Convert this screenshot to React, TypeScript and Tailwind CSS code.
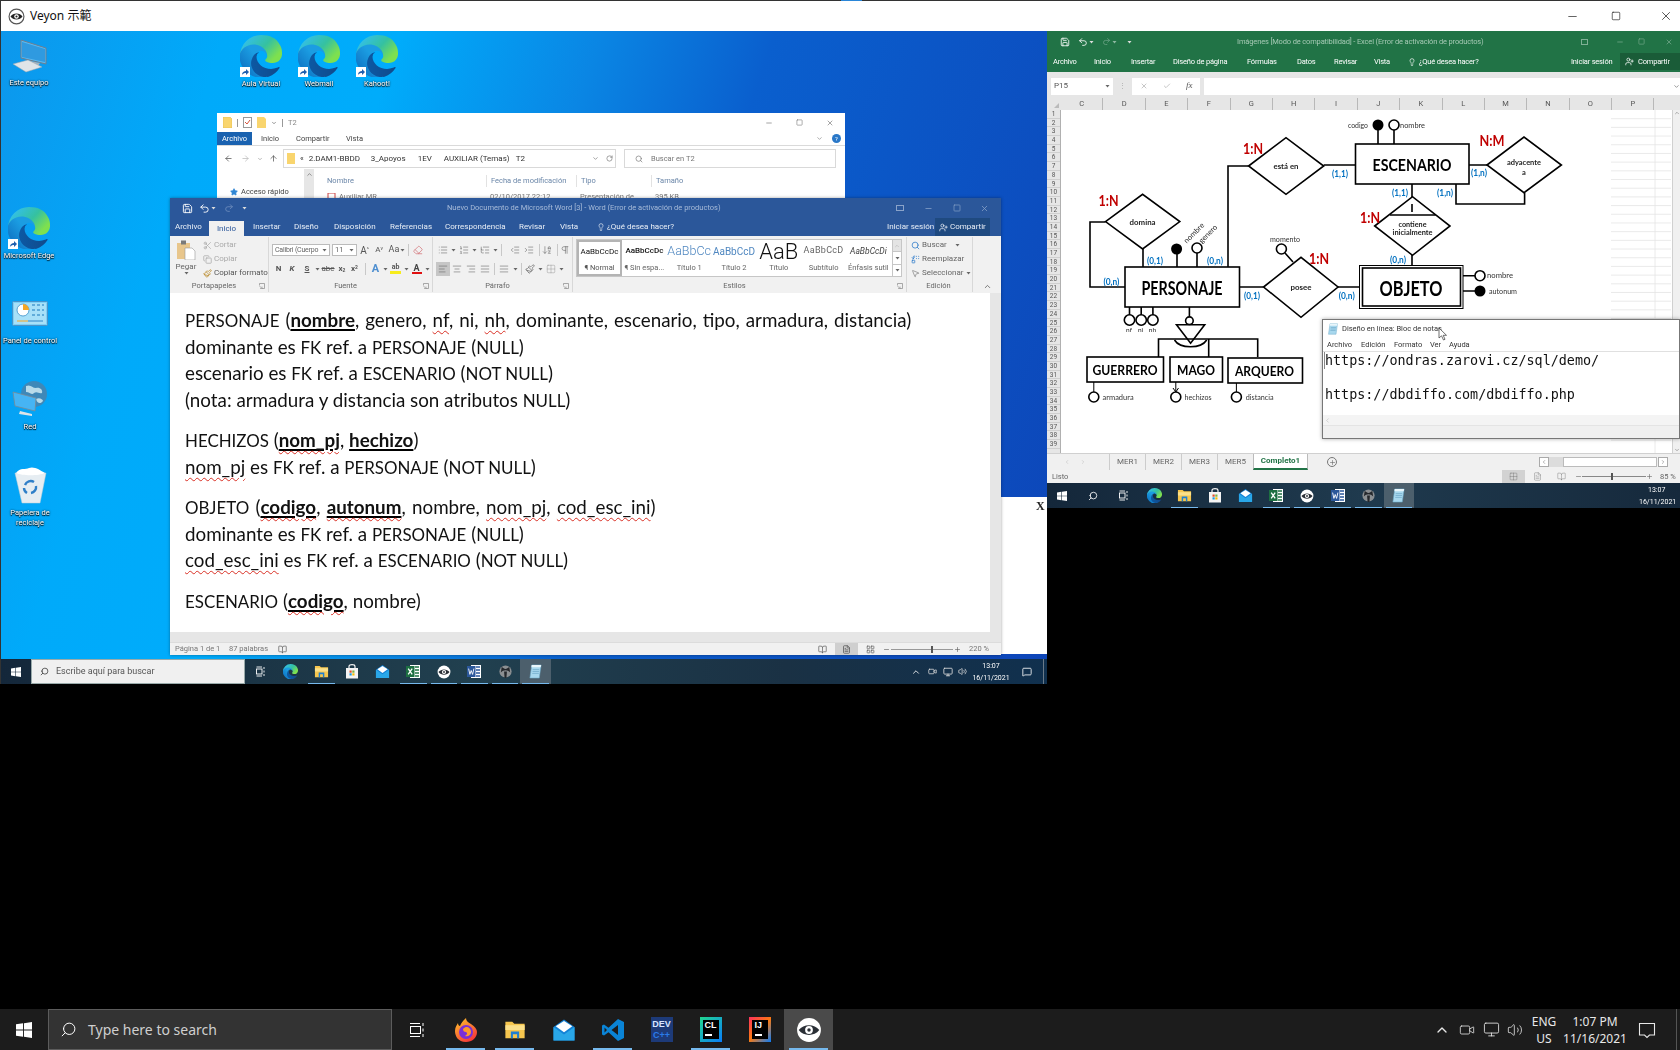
import React from 'react';
import { Scissors, Copy, Paintbrush, AlignLeft, AlignCenter, AlignRight, AlignJustify, List, ListOrdered, ListTree, IndentDecrease, IndentIncrease, ArrowDownAZ, Pilcrow, Lightbulb, UserPlus, Save, Undo2, Redo2, Minus, Square, X, ChevronUp, ChevronDown, Search, Eraser, ArrowLeft, ArrowRight, ArrowUp, RotateCw, MousePointer2, Replace, Grid2x2, LayoutGrid, BookOpen, FileText, Plus, Star, Check, ChevronRight, ChevronLeft, Video, Volume2, MessageSquare, Monitor } from 'lucide-react';

const Caret = ({ c = '#666' }: { c?: string }) => (
  <svg width="5" height="4" viewBox="0 0 5 4" className="shrink-0"><path d="M0.5 1 L4.5 1 L2.5 3.5Z" fill={c} /></svg>
);

const Edge = ({ s = 42 }: { s?: number }) => (
  <svg width={s} height={s} viewBox="0 0 256 256">
    <path d="M235.68 195.46a93.73 93.73 0 0 1-10.54 4.71 101.87 101.87 0 0 1-35.9 6.46c-47.32 0-88.54-32.55-88.54-74.32A31.48 31.48 0 0 1 117.13 105c-42.8 1.8-53.8 46.4-53.8 72.53 0 73.88 68.09 81.37 82.76 81.37 7.91 0 19.84-2.3 27-4.56l1.31-.44a128.34 128.34 0 0 0 66.6-52.8 4 4 0 0 0-5.32-5.64z" fill="url(#edgeA)" />
    <path d="M105.73 241.42A79.2 79.2 0 0 1 83 220.1a80.71 80.71 0 0 1 29.53-120c3.2-1.51 8.67-4.24 15.95-4.11a33.19 33.19 0 0 1 26.35 13.34 32.72 32.72 0 0 1 6.53 19.14c0-.22 25.14-81.79-82.2-81.79-45.11 0-82.2 42.81-82.2 80.37a133.73 133.73 0 0 0 12.44 57.54 131.56 131.56 0 0 0 160.74 68.94 77.6 77.6 0 0 1-64.4-12.11z" fill="url(#edgeB)" />
    <path d="M156.94 147.85c-.83 1.08-3.39 2.57-3.39 5.82 0 2.68 1.75 5.26 4.86 7.43 14.8 10.3 42.72 8.94 42.79 8.94a61.32 61.32 0 0 0 31.17-8.6A63.21 63.21 0 0 0 256 107.07c.27-23.07-8.24-38.41-11.68-45.2C222.5 19.2 183.3 0 128 0A128 128 0 0 0 0 126.2c.36-37.65 37.92-68.06 82.73-68.06 3.63 0 24.33.35 43.56 10.44 16.95 8.9 25.83 19.65 32 30.3 6.4 11.06 7.54 25 7.54 30.56s-2.84 13.81-8.89 18.41z" fill="url(#edgeC)" />
  </svg>
);

const Shortcut = () => (
  <span className="absolute left-0 bottom-0 w-[10px] h-[10px] bg-white flex items-center justify-center">
    <svg width="8" height="8" viewBox="0 0 8 8"><path d="M1 7 C1 4 3 3 5 3 L5 1 L8 4 L5 7 L5 5 C3.5 5 2 5.5 1 7Z" fill="#1f5fae" /></svg>
  </span>
);

const Veyon = ({ s = 20, dark = false }: { s?: number; dark?: boolean }) => (
  <svg width={s} height={s} viewBox="0 0 24 24">
    {dark ? (
      <g>
        <circle cx="12" cy="12" r="10.5" fill="#fff" stroke="#555" strokeWidth="1.6" />
        <path d="M3.5 12 C7 6.5 17 6.5 20.5 12 C17 17.5 7 17.5 3.5 12Z" fill="#222" />
        <circle cx="12" cy="12" r="3.2" fill="#fff" />
        <circle cx="12" cy="12" r="1.5" fill="#222" />
      </g>
    ) : (
      <g>
        <circle cx="12" cy="12" r="11" fill="#fff" />
        <path d="M2.5 12 C7 6 17 6 21.5 12 C17 18 7 18 2.5 12Z" fill="#2a2f36" />
        <circle cx="12" cy="12" r="3.6" fill="#fff" />
        <circle cx="12" cy="12" r="1.6" fill="#2a2f36" />
      </g>
    )}
  </svg>
);

const WinLogo = ({ s = 12 }: { s?: number }) => (
  <svg width={s} height={s} viewBox="0 0 12 12"><path d="M0 1.7 L5.3 1 V5.7 H0Z M6 0.9 L12 0 V5.7 H6Z M0 6.3 H5.3 V11 L0 10.3Z M6 6.3 H12 V12 L6 11.1Z" fill="#fff" /></svg>
);
const FolderIcon = ({ s = 15 }: { s?: number }) => (
  <svg width={s} height={s} viewBox="0 0 16 16"><path d="M1 2 H6 L7.5 3.5 H15 V14 H1Z" fill="#f6c64e" /><path d="M1 4.5 H15 V8 H1Z" fill="#fbe08a" /><path d="M5 9 H11 V14 H9.5 V11 H6.5 V14 H5Z" fill="#1f7fd0" /></svg>
);
const Store = () => (
  <svg width="14" height="15" viewBox="0 0 14 15"><path d="M1 4 H13 V14.5 H1Z" fill="#f4f4f4" /><path d="M4 5 V2.5 C4 0 10 0 10 2.5 V5" fill="none" stroke="#f4f4f4" strokeWidth="1.2" /><rect x="4.5" y="6.5" width="2.2" height="2.2" fill="#e2502b" /><rect x="7.3" y="6.5" width="2.2" height="2.2" fill="#7cb342" /><rect x="4.5" y="9.3" width="2.2" height="2.2" fill="#1f9be0" /><rect x="7.3" y="9.3" width="2.2" height="2.2" fill="#f9bc05" /></svg>
);
const Mail = ({ s = 15 }: { s?: number }) => (
  <svg width={s} height={s} viewBox="0 0 16 16"><path d="M1 6 L8 1 L15 6 V15 H1Z" fill="#1282d6" /><path d="M2.5 5.5 L8 2 L13.5 5.5 L8 9.5Z" fill="#fff" /><path d="M1 6 L8 11 L15 6 V15 H1Z" fill="#29a7e8" /></svg>
);
const ExcelIc = () => (
  <svg width="14" height="15" viewBox="0 0 14 15"><rect x="4" y="1" width="10" height="13" fill="#fff" /><path d="M9 3 H13 M9 6 H13 M9 9 H13 M9 12 H13" stroke="#1d6f42" strokeWidth="1.3" /><rect x="0" y="2" width="8.5" height="11" fill="#1d6f42" /><path d="M2.2 4.6 L6.2 10.4 M6.2 4.6 L2.2 10.4" stroke="#fff" strokeWidth="1.3" /></svg>
);
const WordIc = () => (
  <svg width="14" height="15" viewBox="0 0 14 15"><rect x="4" y="1" width="10" height="13" fill="#fff" /><path d="M9 3 H13 M9 6 H13 M9 9 H13 M9 12 H13" stroke="#2b579a" strokeWidth="1.3" /><rect x="0" y="2" width="8.5" height="11" fill="#2b579a" /><path d="M1.6 4.6 L2.9 10.4 L4.2 6.5 L5.6 10.4 L6.9 4.6" stroke="#fff" strokeWidth="0.9" fill="none" /></svg>
);
const Dark = () => (
  <svg width="15" height="15" viewBox="0 0 16 16"><circle cx="8" cy="8" r="6.5" fill="#8b8f92" /><path d="M4 3 C7 6 9 6 12 3 L13 9 C10 6 6 6 3 9Z" fill="#25282c" /><path d="M6.5 8 L9.5 8 L9 15 L7 15Z" fill="#25282c" /></svg>
);
const Notepad = ({ s = 15 }: { s?: number }) => (
  <svg width={s} height={s} viewBox="0 0 16 16"><path d="M4 1 H14 L12 15 H2Z" fill="#a8d8ee" stroke="#6aa7c6" strokeWidth="0.6" /><path d="M4 1 L14 1 L13.6 3.5 L3.6 3.5Z" fill="#e9f6fb" /><path d="M5 6 H12 M4.8 8 H11.8 M4.5 10 H11.5" stroke="#5c9bbd" strokeWidth="0.6" /></svg>
);

const RCell = ({ on, hl, children }: { on?: boolean; hl?: boolean; children: React.ReactNode }) => (
  <div className={hl ? 'relative w-[30.6px] h-full flex items-center justify-center bg-[#4c5f6c]' : 'relative w-[30.6px] h-full flex items-center justify-center'}>
    {children}
    {on && <span className="absolute bottom-0 left-[2px] right-[2px] h-[1px] bg-[#76b9ed]" />}
  </div>
);

const RemoteIcons = () => (
  <>
    <RCell><svg width="11" height="11" viewBox="0 0 11 11" fill="none" stroke="#fff" strokeWidth="0.9"><rect x="1.5" y="3" width="5.5" height="5" /><path d="M1.5 1 H7 M1.5 10 H7 M9 1 V3 M9 4.5 V6.5 M9 8 V10" /></svg></RCell>
    <RCell><Edge s={15} /></RCell>
    <RCell on><FolderIcon /></RCell>
    <RCell><Store /></RCell>
    <RCell><Mail /></RCell>
    <RCell on><ExcelIc /></RCell>
    <RCell on><Veyon s={14} /></RCell>
    <RCell on><WordIc /></RCell>
    <RCell on><Dark /></RCell>
    <RCell on hl><Notepad /></RCell>
  </>
);

const DeskLabel = ({ children }: { children: React.ReactNode }) => (
  <span className="text-[7.5px] leading-[10px] text-white whitespace-nowrap text-center font-['Roboto',sans-serif] [text-shadow:0_1px_1px_#000,0_0_2px_#000]">{children}</span>
);

const DesktopIcons = () => (
  <>
    <div className="absolute left-[0px] top-[8px] w-[58px] flex flex-col items-center gap-[5px]">
      <svg width="35" height="34" viewBox="0 0 35 34"><path d="M9 1 L34 9 V25 L9 19Z" fill="#5bb9f0" stroke="#6d7f90" strokeWidth="1" /><path d="M10 3 L33 10 V23 L10 18Z" fill="#2f9ae0" /><path d="M18 22 L28 24 L26 27 L16 25Z" fill="#a8b4bf" /><path d="M1 25 L16 21 L30 28 L14 33Z" fill="#dfe4e8" stroke="#9aa5ae" strokeWidth="0.5" /></svg>
      <DeskLabel>Este equipo</DeskLabel>
    </div>
    <div className="absolute left-[232px] top-[4px] w-[58px] flex flex-col items-center gap-[2px]">
      <div className="relative"><Edge s={42} /><Shortcut /></div><DeskLabel>Aula Virtual</DeskLabel>
    </div>
    <div className="absolute left-[290px] top-[4px] w-[58px] flex flex-col items-center gap-[2px]">
      <div className="relative"><Edge s={42} /><Shortcut /></div><DeskLabel>Webmail</DeskLabel>
    </div>
    <div className="absolute left-[348px] top-[4px] w-[58px] flex flex-col items-center gap-[2px]">
      <div className="relative"><Edge s={42} /><Shortcut /></div><DeskLabel>Kahoot!</DeskLabel>
    </div>
    <div className="absolute left-[0px] top-[176px] w-[58px] flex flex-col items-center gap-[2px]">
      <div className="relative"><Edge s={42} /><Shortcut /></div><DeskLabel>Microsoft Edge</DeskLabel>
    </div>
    <div className="absolute left-[0px] top-[270px] w-[60px] flex flex-col items-center gap-[10px]">
      <svg width="36" height="25" viewBox="0 0 36 25"><rect x="0.5" y="0.5" width="35" height="24" rx="1" fill="#7fd0f5" stroke="#4a93c8" /><rect x="2" y="2" width="32" height="21" fill="#a8e0f8" /><circle cx="11" cy="9" r="6" fill="#fff" stroke="#3a8fc8" strokeWidth="0.8" /><path d="M11 3 A6 6 0 0 1 17 9 H11Z" fill="#f5a623" /><path d="M20 4 H32 M20 9 H32 M20 14 H32" stroke="#4a9ad0" strokeWidth="1.6" strokeDasharray="3 2" /><path d="M5 20 H16" stroke="#f5a623" strokeWidth="1" /><path d="M16 20 H31" stroke="#2f86c8" strokeWidth="1" /></svg>
      <DeskLabel>Panel de control</DeskLabel>
    </div>
    <div className="absolute left-[0px] top-[350px] w-[60px] flex flex-col items-center gap-[5px]">
      <svg width="36" height="36" viewBox="0 0 36 36"><circle cx="22" cy="13" r="13" fill="#3e88b8" /><path d="M14 5 C19 3 20 7 24 7 C28 6 31 9 30 12 C27 13 25 10 22 12 C20 15 18 11 14 11Z" fill="#b8dbea" /><path d="M24 18 C27 16 31 18 31 20 C29 23 25 23 24 18Z" fill="#b8dbea" /><path d="M1 11 L24 17 L23 30 L3 25Z" fill="#46b4f4" stroke="#7b8a94" strokeWidth="0.8" /><path d="M8 30 L20 33 L20 35 L7 33Z" fill="#dfe4e8" /></svg>
      <DeskLabel>Red</DeskLabel>
    </div>
    <div className="absolute left-[0px] top-[436px] w-[60px] flex flex-col items-center gap-[4px]">
      <svg width="33" height="37" viewBox="0 0 33 37"><path d="M1 6 L32 6 L26 36 L8 36Z" fill="#e6edf2" stroke="#c2ced6" strokeWidth="0.5" /><path d="M2 6 C6 0 12 3 15 1 C20 -1 26 3 31 6 C25 9 8 9 2 6Z" fill="#fff" /><path d="M11 18 A6 6 0 0 1 20 15 M22 19 A6 6 0 0 1 17 26 M13 26 A6 6 0 0 1 10 21" fill="none" stroke="#2f7fc8" strokeWidth="2.4" /></svg>
      <DeskLabel>Papelera de<br />reciclaje</DeskLabel>
    </div>
  </>
);

const ExplorerWindow = () => (
  <div className="absolute left-[217px] top-[82px] w-[628px] h-[85px] bg-white overflow-hidden flex flex-col text-[#444] font-['Roboto',sans-serif] text-[7.5px]">
    <div className="h-[19px] flex items-center pl-[6px] gap-[5px] shrink-0">
      <svg width="9" height="11" viewBox="0 0 9 11"><path d="M0 0 H7 L9 2 V11 H0Z" fill="#f9d56e" stroke="#dcb44a" strokeWidth="0.5" /></svg>
      <span className="w-px h-[8px] bg-[#999]" />
      <svg width="9" height="11" viewBox="0 0 9 11"><rect x="0.5" y="0.5" width="8" height="10" fill="#fff" stroke="#999" /><path d="M2 5 L4 7 L7 3" stroke="#d4533c" fill="none" /></svg>
      <svg width="9" height="11" viewBox="0 0 9 11"><path d="M0 0 H7 L9 2 V11 H0Z" fill="#f9d56e" /></svg>
      <ChevronDown size={6} className="text-[#333]" />
      <span className="w-px h-[8px] bg-[#999]" />
      <span className="text-[#888]">T2</span>
      <div className="flex-1" />
      <Minus size={8} className="text-[#777] mr-[18px]" />
      <Square size={7} className="text-[#777] mr-[18px]" />
      <X size={8} className="text-[#777] mr-[11px]" />
    </div>
    <div className="h-[14px] flex items-center shrink-0 border-b border-[#dadada] relative">
      <div className="w-[35px] h-full bg-[#1a62b0] text-white flex items-center justify-center">Archivo</div>
      <span className="ml-[9px] w-[35px]">Inicio</span>
      <span className="w-[50px]">Compartir</span>
      <span>Vista</span>
      <div className="flex-1" />
      <ChevronDown size={7} className="text-[#777] mr-[9px]" />
      <span className="w-[9px] h-[9px] rounded-full bg-[#2a78c8] text-white text-[6px] flex items-center justify-center mr-[4px]">?</span>
    </div>
    <div className="h-[23px] flex items-center shrink-0 pt-[2px]">
      <ArrowLeft size={9} className="ml-[7px] text-[#555]" />
      <ArrowRight size={9} className="ml-[8px] text-[#bbb]" />
      <ChevronDown size={6} className="ml-[7px] text-[#777]" />
      <ArrowUp size={9} className="ml-[6px] text-[#555]" />
      <div className="ml-[5px] h-[19px] w-[333px] border border-[#d9d9d9] flex items-center text-[8px] text-[#333] overflow-hidden shrink-0">
        <svg width="8" height="11" viewBox="0 0 8 11" className="ml-[3px] mr-[5px]"><path d="M0 0 H8 V11 H0Z" fill="#f9d56e" /></svg>
        <span className="mr-[5px]">«</span>
        <span className="w-[62px]">2.DAM1-BBDD</span>
        <span className="w-[47px]">3_Apoyos</span>
        <span className="w-[26px]">1EV</span>
        <span className="w-[72px]">AUXILIAR (Temas)</span>
        <span>T2</span>
      </div>
      <ChevronDown size={7} className="ml-[-24px] text-[#666]" />
      <RotateCw size={7} className="ml-[7px] text-[#666]" />
      <div className="ml-[11px] h-[19px] w-[212px] border border-[#d9d9d9] flex items-center text-[#777]">
        <Search size={8} className="ml-[10px] mr-[8px]" />Buscar en T2
      </div>
    </div>
    <div className="flex-1 flex relative">
      <div className="w-[87px] flex items-center pl-[13px] gap-[2px] pt-[12px]">
        <Star size={8} className="text-[#2f86d4] fill-[#2f86d4]" />
        <span className="ml-[1px]">Acceso rápido</span>
      </div>
      <div className="w-[10px] bg-[#e6e6e6] flex justify-center pt-[2px]"><ChevronUp size={7} className="text-[#555]" /></div>
      <div className="flex-1 pl-[13px]">
        <div className="h-[20px] flex items-center text-[#6a86a8] pt-[4px]">
          <span className="w-[159px]">Nombre</span>
          <span className="w-[90px] border-l border-[#e2e2e2] pl-[4px]">Fecha de modificación</span>
          <span className="w-[75px] border-l border-[#e2e2e2] pl-[4px]">Tipo</span>
          <span className="border-l border-[#e2e2e2] pl-[4px]">Tamaño</span>
        </div>
        <div className="h-[10px] flex items-center mt-[3px] text-[#777]">
          <span className="w-[159px] flex items-center gap-[3px]"><svg width="9" height="9" viewBox="0 0 9 9"><rect x="1" y="0" width="7" height="9" fill="#fff" stroke="#c44" /></svg>Auxiliar MR</span>
          <span className="w-[90px] pl-[4px]">02/10/2017 22:12</span>
          <span className="w-[75px] pl-[4px]">Presentación de</span>
          <span className="pl-[4px]">395 KB</span>
        </div>
      </div>
    </div>
  </div>
);

const Sp = ({ children }: { children: React.ReactNode }) => (
  <span className="underline decoration-wavy decoration-[#d93025] decoration-[1px] underline-offset-[3px]">{children}</span>
);
const Key = ({ children }: { children: React.ReactNode }) => (
  <b className="font-bold underline decoration-black decoration-[1.5px] underline-offset-[2px]">{children}</b>
);
const U = ({ children }: { children: React.ReactNode }) => <span className="text-[16.9px] leading-none">{children}</span>;

const Launcher = () => (
  <svg width="6" height="6" viewBox="0 0 6 6" className="shrink-0"><path d="M0.5 2.5 V0.5 H5.5 V5.5 H3" fill="none" stroke="#888" strokeWidth="0.7" /><path d="M0.5 3 L3 5.5 M3 3.5 V5.5 H1" fill="none" stroke="#888" strokeWidth="0.6" /></svg>
);
const VSep = () => <span className="w-px h-[12px] bg-[#c8c8c8] shrink-0" />;

const Section = ({ label, w, launcher = true, children }: { label: string; w: string; launcher?: boolean; children: React.ReactNode }) => (
  <div className={`${w} shrink-0 flex flex-col border-r border-[#d8d8d8] my-[1px] h-[55px]`}>
    <div className="h-[42px] overflow-hidden">{children}</div>
    <div className={launcher ? 'h-[13px] flex items-center relative pr-[10px]' : 'h-[13px] flex items-center relative pr-[2px]'}>
      <span className="flex-1 text-center text-[7.5px] text-[#666]">{label}</span>
      {launcher && <span className="absolute right-[3px] top-[4px]"><Launcher /></span>}
    </div>
  </div>
);

const I = ({ w, children }: { w: string; children: React.ReactNode }) => (
  <span className={`${w} shrink-0 h-[14px] flex items-center justify-center`}>{children}</span>
);

const WordRibbon = () => {
  const ic = { size: 10, strokeWidth: 1.4, className: 'text-[#666]' };
  const tcell = 'w-[44.8px] shrink-0 flex flex-col items-center overflow-hidden';
  return (
    <div className="h-[57px] shrink-0 flex bg-[#f1f1f1] text-[#666] text-[8px] font-['Roboto',sans-serif]">
      <Section label="Portapapeles" w="w-[99px]">
        <div className="flex pt-[3px]">
          <div className="w-[32px] flex flex-col items-center">
            <svg width="19" height="20" viewBox="0 0 19 20"><rect x="0" y="3" width="13" height="16" fill="#e8c68c" /><rect x="4" y="0.5" width="5" height="4" fill="#7a7a7a" /><path d="M8 8 H15 L18 11 V20 H8Z" fill="#fff" stroke="#999" strokeWidth="0.6" /></svg>
            <span className="mt-[2px] leading-[9px]">Pegar</span>
            <Caret />
          </div>
          <div className="flex flex-col pl-[1px] text-[#aaa] -mt-[2px]">
            <span className="h-[14px] flex items-center gap-[2px]"><Scissors size={9} className="text-[#aaa]" />Cortar</span>
            <span className="h-[14px] flex items-center gap-[2px]"><Copy size={9} className="text-[#aaa]" />Copiar</span>
            <span className="h-[14px] flex items-center gap-[2px] text-[#555]"><Paintbrush size={9} className="text-[#b98a2a]" />Copiar formato</span>
          </div>
        </div>
      </Section>
      <Section label="Fuente" w="w-[164px]">
        <div className="flex items-center mt-[6px] h-[14px]">
          <div className="ml-[3px] w-[58px] h-[12px] bg-white border border-[#bbb] flex items-center pl-[2px] whitespace-nowrap text-[7px] tracking-[-0.2px]"><span className="w-[47px]">Calibri (Cuerpo</span><Caret /></div>
          <div className="ml-[2px] w-[25px] h-[12px] bg-white border border-[#bbb] flex items-center justify-between px-[2px] text-[7.5px]"><span>11</span><Caret /></div>
          <I w="w-[15px]"><span className="text-[10px] text-[#555]">A<sup className="text-[5px]">^</sup></span></I>
          <I w="w-[14px]"><span className="text-[8px] text-[#555]">A<sup className="text-[5px]">v</sup></span></I>
          <I w="w-[22px]"><span className="text-[9px] text-[#555] mr-[1px]">Aa</span><Caret /></I>
          <VSep />
          <I w="w-[18px]"><Eraser size={10} className="text-[#d67f84]" /></I>
        </div>
        <div className="flex items-center mt-[5px] h-[14px] pl-[3px] text-[8px] font-bold text-[#555]">
          <I w="w-[13px]">N</I><I w="w-[14px]"><i>K</i></I><I w="w-[16px]"><u>S</u></I><I w="w-[5px]"><Caret /></I>
          <I w="w-[16px]"><s className="font-normal">abc</s></I><I w="w-[12px]"><span>x<sub className="text-[5px]">2</sub></span></I><I w="w-[13px]"><span>x<sup className="text-[5px]">2</sup></span></I>
          <span className="w-[4px]" /><VSep /><span className="w-[3px]" />
          <I w="w-[13px]"><span className="text-[#4f8fd0] text-[11px]">A</span></I><I w="w-[6px]"><Caret /></I>
          <I w="w-[15px]"><span className="flex flex-col items-center leading-[7px] text-[7px]">ab<span className="w-[11px] h-[3px] bg-[#f7ec1c]" /></span></I><I w="w-[6px]"><Caret /></I>
          <I w="w-[15px]"><span className="flex flex-col items-center leading-[8px] text-[9px] text-[#444]">A<span className="w-[10px] h-[2px] bg-[#e01010]" /></span></I><I w="w-[6px]"><Caret /></I>
        </div>
      </Section>
      <Section label="Párrafo" w="w-[140px]">
        <div className="flex items-center mt-[6px] h-[14px] pl-[3px]">
          <I w="w-[14px]"><List {...ic} /></I><I w="w-[7px]"><Caret /></I>
          <I w="w-[14px]"><ListOrdered {...ic} /></I><I w="w-[7px]"><Caret /></I>
          <I w="w-[14px]"><ListTree {...ic} /></I><I w="w-[6px]"><Caret /></I>
          <span className="w-[4px]" /><VSep /><span className="w-[7px]" />
          <I w="w-[14px]"><IndentDecrease {...ic} /></I><I w="w-[14px]"><IndentIncrease {...ic} /></I>
          <span className="w-[4px]" /><VSep /><I w="w-[15px]"><ArrowDownAZ {...ic} /></I>
          <span className="w-[3px]" /><VSep /><I w="w-[14px]"><Pilcrow {...ic} /></I>
        </div>
        <div className="flex items-center mt-[5px] h-[14px] pl-[3px]">
          <span className="w-[14px] h-[14px] bg-[#c6c6c6] flex items-center justify-center"><AlignLeft {...ic} /></span>
          <I w="w-[14px]"><AlignCenter {...ic} /></I><I w="w-[14px]"><AlignRight {...ic} /></I><I w="w-[14px]"><AlignJustify {...ic} /></I>
          <span className="w-[2px]" /><VSep /><span className="w-[2px]" />
          <I w="w-[14px]"><AlignJustify {...ic} /></I><I w="w-[8px]"><Caret /></I>
          <span className="w-[2px]" /><VSep /><span className="w-[1px]" />
          <I w="w-[14px]"><Paintbrush size={10} className="text-[#777]" /></I><I w="w-[7px]"><Caret /></I>
          <I w="w-[14px]"><Grid2x2 size={10} strokeWidth={1} className="text-[#888]" /></I><I w="w-[6px]"><Caret /></I>
        </div>
      </Section>
      <Section label="Estilos" w="w-[334px]">
        <div className="ml-[3px] mt-[2px] w-[326px] h-[38px] bg-white border border-[#c6c6c6] flex overflow-hidden">
          <div className="w-[45px] shrink-0 flex flex-col items-center border-2 border-[#b4b4b4] overflow-hidden">
            <span className="h-[20px] flex items-center text-[8px] text-[#111] whitespace-nowrap">AaBbCcDc</span><span className="text-[7.5px] text-[#555] whitespace-nowrap">¶ Normal</span>
          </div>
          <div className={tcell}><span className="h-[22px] flex items-center text-[8px] text-[#111] whitespace-nowrap font-medium">AaBbCcDc</span><span className="text-[7.5px] whitespace-nowrap">¶ Sin espa...</span></div>
          <div className={tcell}><span className="h-[22px] flex items-center text-[12.5px] text-[#4f87c0] whitespace-nowrap font-light">AaBbCc</span><span className="text-[7.5px] whitespace-nowrap">Título 1</span></div>
          <div className={tcell}><span className="h-[22px] flex items-center text-[10px] text-[#4f87c0] whitespace-nowrap">AaBbCcD</span><span className="text-[7.5px] whitespace-nowrap">Título 2</span></div>
          <div className={tcell}><span className="h-[22px] flex items-center text-[22px] text-[#111] whitespace-nowrap font-light">AaB</span><span className="text-[7.5px] whitespace-nowrap">Título</span></div>
          <div className={tcell}><span className="h-[22px] flex items-center text-[9px] text-[#666] whitespace-nowrap tracking-[0.3px]">AaBbCcD</span><span className="text-[7.5px] whitespace-nowrap">Subtítulo</span></div>
          <div className={tcell}><span className="h-[22px] flex items-center text-[8.5px] text-[#444] italic whitespace-nowrap">AaBbCcDi</span><span className="text-[7.5px] whitespace-nowrap">Énfasis sutil</span></div>
          <div className="flex-1" />
          <div className="w-[9px] flex flex-col border-l border-[#c6c6c6]">
            <span className="flex-1 bg-[#e4e4e4] flex items-center justify-center"><ChevronUp size={6} className="text-[#aaa]" /></span>
            <span className="flex-1 flex items-center justify-center border-y border-[#c6c6c6]"><Caret /></span>
            <span className="flex-1 flex items-center justify-center"><Caret /></span>
          </div>
        </div>
      </Section>
      <Section label="Edición" w="w-[66px]" launcher={false}>
        <div className="pt-[1px] pl-[4px]">
          <span className="h-[14px] flex items-center gap-[2px]"><Search size={9} className="text-[#2a78c8]" />Buscar<span className="ml-[6px]"><Caret /></span></span>
          <span className="h-[14px] flex items-center gap-[2px]"><Replace size={9} className="text-[#2a78c8]" />Reemplazar</span>
          <span className="h-[14px] flex items-center gap-[2px]"><MousePointer2 size={9} className="text-[#888]" />Seleccionar<Caret /></span>
        </div>
      </Section>
      <div className="flex-1 flex items-end justify-center pb-[2px]"><ChevronUp size={9} className="text-[#555]" /></div>
    </div>
  );
};

const WordWindow = () => (
  <div className="absolute left-[170px] top-[167px] w-[831px] h-[457px] flex flex-col shadow-[0_0_3px_#00000060]">
    <div className="h-[20px] shrink-0 bg-[#2b579a] flex items-center text-[7.5px] text-[#a7bbd9] font-['Roboto',sans-serif]">
      <Save size={11} className="ml-[12px] text-white" />
      <Undo2 size={11} className="ml-[6px] text-white" />
      <span className="ml-[1px]"><Caret c="#ddd" /></span>
      <Redo2 size={10} className="ml-[8px] text-[#6d8dbd]" />
      <span className="ml-[8px]"><Caret c="#ddd" /></span>
      <span className="ml-[200px] w-[275px] whitespace-nowrap">Nuevo Documento de Microsoft Word [3] - Word (Error de activación de productos)</span>
      <span className="ml-[174px] w-[8px] h-[6px] border border-[#8aa3c9]" />
      <Minus size={9} className="ml-[20px] text-[#8aa3c9]" />
      <Square size={8} className="ml-[20px] text-[#8aa3c9]" />
      <X size={9} className="ml-[19px] text-[#8aa3c9]" />
    </div>
    <div className="h-[18px] shrink-0 bg-[#2b579a] flex items-stretch text-[8px] text-[#e8eef6] font-['Roboto',sans-serif]">
      <span className="w-[39px] pl-[5px] flex items-center">Archivo</span>
      <span className="w-[35px] mt-[3px] bg-[#f1f1f1] text-[#2b579a] flex items-center justify-center">Inicio</span>
      <span className="w-[50px] pl-[9px] flex items-center">Insertar</span>
      <span className="w-[40px] flex items-center">Diseño</span>
      <span className="w-[56px] flex items-center">Disposición</span>
      <span className="w-[55px] flex items-center">Referencias</span>
      <span className="w-[74px] flex items-center">Correspondencia</span>
      <span className="w-[41px] flex items-center">Revisar</span>
      <span className="w-[37px] flex items-center">Vista</span>
      <span className="w-[10px] flex items-center"><Lightbulb size={8} /></span>
      <span className="w-[280px] flex items-center">¿Qué desea hacer?</span>
      <span className="w-[48px] flex items-center">Iniciar sesión</span>
      <span className="w-[55px] bg-[#1f4a80] flex items-center pl-[4px] gap-[2px]"><UserPlus size={9} />Compartir</span>
    </div>
    <WordRibbon />
    <div className="flex-1 flex min-h-0">
      <div className="flex-1 bg-white pl-[15px] pt-[14px] text-[#111] font-['Lato',sans-serif] text-[18.8px] leading-[26.67px] overflow-hidden whitespace-nowrap">
        <p className="[word-spacing:1.2px]"><U>PERSONAJE</U> (<Key>nombre</Key>, genero, <Sp>nf</Sp>, ni, <Sp>nh</Sp>, dominante, escenario, tipo, armadura, distancia)</p>
        <p>dominante es <U>FK</U> ref. a <U>PERSONAJE</U> (<U>NULL</U>)</p>
        <p>escenario es <U>FK</U> ref. a <U>ESCENARIO</U> (<U>NOT NULL</U>)</p>
        <p className="mb-[13.5px]">(nota: armadura y distancia son atributos <U>NULL</U>)</p>
        <p><U>HECHIZOS</U> (<Key><Sp>nom_pj</Sp></Key>, <Key>hechizo</Key>)</p>
        <p className="mb-[13.5px]"><Sp>nom_pj</Sp> es <U>FK</U> ref. a <U>PERSONAJE</U> (<U>NOT NULL</U>)</p>
        <p className="[word-spacing:1.5px]"><U>OBJETO</U> (<Key><Sp>codigo</Sp></Key>, <Key><Sp>autonum</Sp></Key>, nombre, <Sp>nom_pj</Sp>, <Sp>cod_esc_ini</Sp>)</p>
        <p>dominante es <U>FK</U> ref. a <U>PERSONAJE</U> (<U>NULL</U>)</p>
        <p className="mb-[13.5px]"><Sp>cod_esc_ini</Sp> es <U>FK</U> ref. a <U>ESCENARIO</U> (<U>NOT NULL</U>)</p>
        <p><U>ESCENARIO</U> (<Key><Sp>codigo</Sp></Key>, nombre)</p>
      </div>
      <div className="w-[11px] bg-[#e6e6e6]" />
    </div>
    <div className="h-[10px] shrink-0 bg-[#e6e6e6]" />
    <div className="h-[13px] shrink-0 bg-[#f1f1f1] flex items-center text-[7.5px] text-[#777] font-['Roboto',sans-serif] border-t border-[#dcdcdc]">
      <span className="ml-[5px] w-[54px]">Página 1 de 1</span>
      <span className="w-[49px]">87 palabras</span>
      <BookOpen size={9} className="text-[#666]" />
      <div className="flex-1" />
      <BookOpen size={9} className="text-[#666] mr-[8px]" />
      <span className="w-[23px] h-full bg-[#cfcfcf] flex items-center justify-center"><FileText size={9} className="text-[#555]" /></span>
      <LayoutGrid size={9} className="ml-[8px] text-[#666]" />
      <Minus size={7} className="ml-[8px] text-[#555]" />
      <div className="w-[62px] h-px bg-[#999] relative mx-[1px]"><span className="absolute left-[40px] top-[-3px] w-[2px] h-[7px] bg-[#555]" /></div>
      <Plus size={7} className="text-[#555]" />
      <span className="ml-[8px] mr-[12px]">220 %</span>
    </div>
  </div>
);

const LeftTaskbar = () => (
  <div className="h-[25px] shrink-0 bg-[linear-gradient(90deg,#14273a,#21404f_45%,#1a3144_75%,#10304e)] flex items-center font-['Roboto',sans-serif]">
    <div className="w-[31px] flex justify-center"><WinLogo s={10} /></div>
    <div className="w-[214px] h-full bg-[#f0f0f0] flex items-center text-[#555] text-[9px] border border-[#9aa]">
      <Search size={9} className="ml-[8px] mr-[7px] text-[#333] -scale-x-100" />Escribe aquí para buscar
    </div>
    <RemoteIcons />
    <div className="flex-1" />
    <ChevronUp size={10} className="text-white mr-[7px]" />
    <Video size={9} className="text-[#ddd] mr-[6px]" />
    <Monitor size={10} className="text-[#ddd] mr-[5px]" />
    <Volume2 size={9} className="text-[#ddd] mr-[4px]" />
    <div className="w-[40px] text-center text-white text-[7px] leading-[12px] mr-[11px]">13:07<br />16/11/2021</div>
    <MessageSquare size={10} className="text-white mr-[11px]" />
    <span className="w-px h-full bg-[#6a7a88] mr-[3px]" />
  </div>
);

const ER = () => {
  const sw = 1.6;
  const T = ({ x, y, w, s, c = '#222', b = false, children, rot }: { x: number; y: number; w?: number; s: number; c?: string; b?: boolean; children: string; rot?: number }) => (
    <text x={x} y={y} fontSize={s} fill={c} fontWeight={b ? 700 : 400} fontFamily="Lato, sans-serif" textAnchor="middle" dominantBaseline="central" textLength={w} lengthAdjust="spacingAndGlyphs" transform={rot ? `rotate(${rot} ${x} ${y})` : undefined}>{children}</text>
  );
  const L = ({ x, y, w, s, children }: { x: number; y: number; w?: number; s: number; children: string }) => (
    <text x={x} y={y} fontSize={s} fill="#333" fontFamily="Lato, sans-serif" dominantBaseline="central" textLength={w} lengthAdjust="spacingAndGlyphs">{children}</text>
  );
  const Red = (p: { x: number; y: number; w?: number; children: string }) => <T {...p} w={p.w ?? 20} s={16} c="#c00000" b />;
  const Blue = (p: { x: number; y: number; children: string }) => <T {...p} w={16} s={10} c="#0070c0" b />;
  const rows = Array.from({ length: 38 }, (_, i) => 110 + (i + 1) * 8.69);
  return (
    <svg width="619" height="343" viewBox="1061 110 619 343" className="block">
      <g stroke="#e4e4e4" strokeWidth="0.8">
        {rows.map((y) => <line key={y} x1="1611" x2="1671" y1={y} y2={y} />)}
        <line x1="1655" x2="1655" y1="110" y2="453" />
      </g>
      <g fill="none" stroke="#000" strokeWidth={sw}>
        <rect x="1355.5" y="144" width="113.5" height="40" />
        <rect x="1125" y="267" width="114.5" height="40" />
        <rect x="1359.5" y="265.5" width="103.5" height="43" strokeWidth="1" />
        <rect x="1362.5" y="268" width="98" height="38" />
        <rect x="1087" y="357" width="76.5" height="25" />
        <rect x="1170" y="357" width="52.5" height="25" />
        <rect x="1228" y="358" width="74.5" height="25" />
        <polygon points="1248.6,166 1286,137.7 1323.7,166 1286,194.3" />
        <polygon points="1487,165 1524,137 1561.4,165 1524,192.7" />
        <polygon points="1374.7,226 1412.5,196.7 1450,226 1412.5,255.3" />
        <polygon points="1263.6,287 1301,257.3 1338,287 1301,317.3" />
        <polygon points="1105.5,221.6 1142.6,194.3 1179.8,221.6 1142.6,249" />
        <path d="M1228 267 V166 H1248.6 M1323.7 165 H1355.5 M1469 165 H1487 M1456 184 V204 H1524.6 V192.7 M1412 184 V197 M1412 255 V265.5 M1378 130 V144 M1394 130 V144" />
        <path d="M1239.5 287 H1263.6 M1338 287 H1359.5 M1463 275.7 H1475 M1463 291 H1475 M1105.5 222 H1090 V287 H1125 M1143 249 V267 M1177 254 V267 M1197 253 V267 M1285 253 L1293 262" />
        <path d="M1390 215 H1435.6 M1412 204 V212" />
        <path d="M1129.5 307 V315 M1141.2 307 V315 M1152.9 307 V315 M1189.4 307 V316.5" />
        <path d="M1176.5 324.7 H1204.7 L1190.6 343.3Z" />
        <path d="M1174.5 340 C1180 349 1201 349 1206.7 340" />
        <path d="M1158.5 357 V339 H1257.7 V357 M1208.7 339 V357" />
        <path d="M1093.8 382 V392 M1175.8 382 V392 M1173 388 L1175.8 392 L1178.5 388 M1236.4 383 V392" strokeWidth="1" />
        <circle cx="1394" cy="125" r="5" fill="#fff" />
        <circle cx="1480" cy="275.7" r="5" fill="#fff" />
        <circle cx="1197" cy="248" r="5" fill="#fff" />
        <circle cx="1281.4" cy="249" r="5" fill="#fff" />
        <circle cx="1129.5" cy="320" r="5.2" fill="#fff" />
        <circle cx="1141.2" cy="320" r="5.2" fill="#fff" />
        <circle cx="1152.9" cy="320" r="5.2" fill="#fff" />
        <circle cx="1189.4" cy="320.7" r="3.8" fill="#fff" />
        <circle cx="1093.8" cy="397" r="5" fill="#fff" />
        <circle cx="1175.8" cy="397" r="5" fill="#fff" />
        <circle cx="1236.4" cy="397" r="5" fill="#fff" />
      </g>
      <circle cx="1378" cy="125" r="5.5" fill="#000" />
      <circle cx="1480" cy="291" r="5.5" fill="#000" />
      <circle cx="1176.6" cy="249" r="5.5" fill="#000" />
      <T x={1412} y={164} w={79} s={17} b c="#000">ESCENARIO</T>
      <T x={1182} y={288} w={81} s={18} b c="#000">PERSONAJE</T>
      <T x={1411} y={288} w={63} s={20} b c="#000">OBJETO</T>
      <T x={1125} y={369} w={65} s={14} b c="#000">GUERRERO</T>
      <T x={1196} y={369} w={38} s={14} b c="#000">MAGO</T>
      <T x={1264.5} y={370} w={59} s={14} b c="#000">ARQUERO</T>
      <Red x={1253} y={147}>1:N</Red>
      <Red x={1492} y={139} w={25}>N:M</Red>
      <Red x={1370} y={216}>1:N</Red>
      <Red x={1319} y={257}>1:N</Red>
      <Red x={1108.5} y={199}>1:N</Red>
      <Blue x={1340} y={173}>(1,1)</Blue>
      <Blue x={1479} y={172}>(1,n)</Blue>
      <Blue x={1445} y={192}>(1,n)</Blue>
      <Blue x={1400} y={192}>(1,1)</Blue>
      <Blue x={1398} y={259}>(0,n)</Blue>
      <Blue x={1252} y={295}>(0,1)</Blue>
      <Blue x={1346.7} y={295}>(0,n)</Blue>
      <Blue x={1111.4} y={281}>(0,n)</Blue>
      <Blue x={1155} y={260}>(0,1)</Blue>
      <Blue x={1215} y={260}>(0,n)</Blue>
      <T x={1286} y={166} w={25} s={8} b>está en</T>
      <T x={1524} y={162} w={34} s={7.5} b>adyacente</T>
      <T x={1524} y={172} s={7.5} b>a</T>
      <T x={1412.5} y={224} w={28} s={7.5} b>contiene</T>
      <T x={1412.5} y={232.5} w={40} s={7.5} b>inicialmente</T>
      <T x={1301} y={287} w={21} s={8} b>posee</T>
      <T x={1142.6} y={221.7} w={26} s={8} b>domina</T>
      <L x={1348} y={125} w={20} s={7.5}>codigo</L>
      <L x={1400} y={125} w={25} s={7.5}>nombre</L>
      <L x={1487} y={275.5} w={26} s={7.5}>nombre</L>
      <L x={1489} y={291} w={28} s={7.5}>autonum</L>
      <L x={1270} y={239} w={30} s={7.5}>momento</L>
      <T x={1194} y={233} s={7.5} rot={-45}>nombre</T>
      <T x={1208} y={234} s={7.5} rot={-45}>genero</T>
      <T x={1129} y={329} s={6.5}>nf</T>
      <T x={1140.5} y={329} s={6.5}>ni</T>
      <T x={1152.5} y={329} s={6.5}>nh</T>
      <L x={1102.6} y={397} w={31} s={7.5}>armadura</L>
      <L x={1184.6} y={397} w={27} s={7.5}>hechizos</L>
      <L x={1245.7} y={397} w={28} s={7.5}>distancia</L>
    </svg>
  );
};

const cols = ['C', 'D', 'E', 'F', 'G', 'H', 'I', 'J', 'K', 'L', 'M', 'N', 'O', 'P', ''];
const rowNums = Array.from({ length: 39 }, (_, i) => i + 1);

const ExcelWindow = () => (
  <div className="w-[633px] h-[477px] relative flex flex-col bg-[#e6e6e6] font-['Roboto',sans-serif] overflow-hidden">
    <div className="h-[21px] shrink-0 bg-[#217346] flex items-center text-[#a5c9b4] text-[7.5px] tracking-[-0.15px]">
      <Save size={10} className="ml-[13px] text-white" />
      <Undo2 size={10} className="ml-[8px] text-white" />
      <span className="ml-[1px]"><Caret c="#ddd" /></span>
      <Redo2 size={9} className="ml-[8px] text-[#6fa688]" />
      <span className="ml-[1px]"><Caret c="#8fb8a2" /></span>
      <span className="ml-[10px]"><Caret c="#ddd" /></span>
      <span className="ml-[105px] w-[262px] whitespace-nowrap">Imágenes [Modo de compatibilidad] - Excel (Error de activación de productos)</span>
      <span className="ml-[82px] w-[7px] h-[6px] border border-[#7fb095]" />
      <Minus size={8} className="ml-[28px] text-[#7fb095]" />
      <Square size={7} className="ml-[14px] text-[#7fb095]" />
      <X size={8} className="ml-[20px] text-[#7fb095]" />
    </div>
    <div className="h-[20px] shrink-0 bg-[#217346] flex items-stretch text-white text-[7.5px] tracking-[-0.2px] pb-[1px]">
      <span className="w-[47px] pl-[6px] flex items-center">Archivo</span>
      <span className="w-[37px] flex items-center">Inicio</span>
      <span className="w-[42px] flex items-center">Insertar</span>
      <span className="w-[74px] flex items-center">Diseño de página</span>
      <span className="w-[50px] flex items-center">Fórmulas</span>
      <span className="w-[37px] flex items-center">Datos</span>
      <span className="w-[40px] flex items-center">Revisar</span>
      <span className="w-[37px] flex items-center">Vista</span>
      <span className="w-[8px] -ml-[3px] mr-[3px] flex items-center"><Lightbulb size={8} /></span>
      <span className="w-[152px] flex items-center">¿Qué desea hacer?</span>
      <span className="w-[49px] flex items-center">Iniciar sesión</span>
      <span className="flex-1 bg-[#1a5c38] flex items-center pl-[5px] gap-[4px] my-[1px]"><UserPlus size={9} />Compartir</span>
    </div>
    <div className="h-[26px] shrink-0 flex items-center text-[#555] text-[8px] pt-[2px]">
      <div className="ml-[4px] w-[62px] h-[17px] bg-white flex items-center justify-between px-[3px]"><span>P15</span><Caret /></div>
      <span className="w-[19px] text-center text-[#aaa] text-[7px]">⋮</span>
      <div className="w-[68px] h-[17px] bg-white flex items-center justify-around text-[#aaa]"><X size={8} /><Check size={8} /><i className="font-['Liberation_Serif',serif] text-[#555] text-[9px]">fx</i></div>
      <div className="ml-[4px] flex-1 h-[17px] bg-white flex items-center justify-end"><ChevronDown size={7} /></div>
    </div>
    <div className="h-[12px] shrink-0 flex text-[7.5px] text-[#555]">
      <div className="w-[14px] shrink-0 flex items-end justify-end pr-[2px] pb-[2px]"><svg width="5" height="5" viewBox="0 0 5 5"><path d="M5 0 V5 H0Z" fill="#bbb" /></svg></div>
      {cols.map((c, i) => <span key={i} className="w-[42.4px] shrink-0 text-center leading-[12px] border-r border-[#b8b8b8]">{c}</span>)}
    </div>
    <div className="h-[343px] shrink-0 flex relative">
      <div className="w-[14px] shrink-0 flex flex-col text-[6.5px] text-[#555] border-r border-[#b0b0b0] overflow-hidden">
        {rowNums.map((n) => <span key={n} className="h-[8.69px] shrink-0 leading-[8.69px] text-center border-b border-[#cfcfcf]">{n}</span>)}
      </div>
      <div className="flex-1 bg-white relative overflow-hidden"><ER /></div>
      <div className="absolute right-0 top-0 bottom-0 w-[8px] bg-[#f0f0f0] border-l border-[#d0d0d0] flex flex-col items-center justify-between">
        <ChevronUp size={6} className="text-[#666]" /><ChevronDown size={6} className="text-[#666]" />
      </div>
    </div>
    <div className="h-[17px] shrink-0 bg-[#f0f0f0] flex items-stretch text-[8px] text-[#666] border-t border-[#d0d0d0]">
      <span className="w-[62px] flex items-center pl-[17px] gap-[10px]"><ChevronLeft size={6} className="text-[#bbb]" /><ChevronRight size={6} className="text-[#bbb]" /></span>
      {['MER1', 'MER2', 'MER3', 'MER5'].map((m) => <span key={m} className="w-[36px] border-l border-[#ccc] flex items-center justify-center">{m}</span>)}
      <span className="w-[55px] bg-white border-x border-[#bbb] border-b-2 border-b-[#217346] text-[#217346] font-bold flex items-center justify-center">Completo1</span>
      <span className="ml-[19px] flex items-center"><span className="w-[10px] h-[10px] rounded-full border border-[#777] flex items-center justify-center"><Plus size={7} /></span></span>
      <div className="flex-1" />
      <span className="w-[10px] my-[3px] border border-[#aaa] bg-white flex items-center justify-center"><ChevronLeft size={6} /></span>
      <span className="w-[14px] my-[3px] bg-[#dcdcdc]" />
      <span className="w-[94px] my-[3px] border border-[#bbb] bg-white" />
      <span className="w-[10px] my-[3px] ml-[1px] border border-[#aaa] bg-white flex items-center justify-center mr-[12px]"><ChevronRight size={6} /></span>
    </div>
    <div className="h-[13px] shrink-0 bg-[#f1f1f1] flex items-center text-[7.5px] text-[#666]">
      <span className="ml-[5px]">Listo</span>
      <div className="flex-1" />
      <span className="w-[23px] h-full bg-[#d2d2d2] flex items-center justify-center"><Grid2x2 size={9} strokeWidth={1} /></span>
      <FileText size={9} strokeWidth={1} className="ml-[8px]" />
      <BookOpen size={9} strokeWidth={1} className="ml-[15px]" />
      <Minus size={7} className="ml-[9px]" />
      <div className="w-[64px] h-px bg-[#888] relative"><span className="absolute left-[29px] top-[-3px] w-[2px] h-[7px] bg-[#555]" /></div>
      <Plus size={7} />
      <span className="ml-[7px] w-[20px] whitespace-nowrap">85 %</span>
    </div>
    <div className="h-[25px] shrink-0 bg-[linear-gradient(90deg,#14273a,#1f3a4e_50%,#16293c)] flex items-center relative">
      <RCell><WinLogo s={10} /></RCell>
      <RCell><Search size={10} className="text-white -scale-x-100" /></RCell>
      <RemoteIcons />
      <div className="flex-1" />
      <div className="w-[47px] text-white text-[7px] leading-[12px] whitespace-nowrap pl-[6px]"><span className="ml-[9px]">13:07</span><br />16/11/2021</div>
    </div>
    <div className="absolute left-[275px] top-[288px] w-[358px] h-[120px] bg-[#f0f0f0] border border-[#777] flex flex-col text-[#333] shadow-[0_0_4px_#0005]">
      <div className="h-[18px] bg-white flex items-center pl-[4px] gap-[3px] text-[7.5px]"><Notepad s={12} /><span>Diseño en línea: Bloc de notas</span></div>
      <div className="h-[13px] bg-white flex items-center text-[7.5px]">
        <span className="ml-[4px] w-[34px]">Archivo</span><span className="w-[33px]">Edición</span><span className="w-[36px]">Formato</span><span className="w-[19px]">Ver</span><span>Ayuda</span>
      </div>
      <div className="h-[64px] bg-white border-t border-[#e0e0e0] pl-[2px] font-['DejaVu_Sans_Mono',monospace] text-[13.4px] leading-[17px] text-[#111] whitespace-nowrap">
        <div className="border-l border-[#888] -ml-[1px]">https://ondras.zarovi.cz/sql/demo/</div><div>&nbsp;</div><div>https://dbdiffo.com/dbdiffo.php</div>
      </div>
      <div className="h-[10px] bg-[#f4f4f4] flex items-center pl-[1px]"><ChevronLeft size={7} className="text-[#bbb]" /></div>
      <div className="flex-1 bg-[#f0f0f0] border-t border-[#e4e4e4]" />
    </div>
    <svg width="12" height="14" viewBox="0 0 12 14" className="absolute left-[391px] top-[296px]"><path d="M1 1 V11 L3.5 8.8 L5.5 13 L7 12.3 L5.2 8.3 L8.5 8.3Z" fill="#fff" stroke="#333" strokeWidth="0.7" /></svg>
  </div>
);

const HCell = ({ on, hl, children }: { on?: boolean; hl?: boolean; children: React.ReactNode }) => (
  <div className={hl ? 'relative w-[49px] h-full flex items-center justify-center bg-[#4a4a4a]' : 'relative w-[49px] h-full flex items-center justify-center'}>
    {children}
    {on && <span className="absolute bottom-0 left-[5px] right-[5px] h-[2px] bg-[#76b9ed]" />}
  </div>
);

const HostTaskbar = () => (
  <div className="h-[41px] shrink-0 bg-[#1c1c1c] flex items-stretch text-white font-['Noto_Sans',sans-serif]">
    <div className="w-[48px] flex items-center justify-center"><WinLogo s={16} /></div>
    <div className="w-[344px] bg-[#333333] border border-[#5c5c5c] flex items-center text-[#cfcfcf] text-[14px]">
      <Search size={17} strokeWidth={1.4} className="ml-[11px] mr-[11px] -scale-x-100 text-white" />Type here to search
    </div>
    <HCell><svg width="16" height="16" viewBox="0 0 16 16" fill="none" stroke="#fff" strokeWidth="1"><rect x="1.5" y="4.5" width="10" height="7" /><path d="M1 1.5 H11 M1 14.5 H11 M14 1 V4 M14 6.5 V9.5 M14 12 V15" /></svg></HCell>
    <HCell on><svg width="24" height="26" viewBox="0 0 24 26"><path d="M12 25 C4 25 1 19 1 14 C1 10 3 8 4 6 C4 8 5 9 6 9 C7 6 9 4 12 1 C12 4 14 5 17 7 C21 10 23 12 23 15 C23 21 18 25 12 25Z" fill="url(#ffA)" /><circle cx="12" cy="15" r="7" fill="#7a2fd8" /><path d="M12 10 C15 10 17 12 17 15 C17 18 14 20 11 19 C13 18 14 16 12 15 C10 15 9 14 9 12 C10 11 11 10 12 10Z" fill="#ff9a2a" /></svg></HCell>
    <HCell on><FolderIcon s={22} /></HCell>
    <HCell><Mail s={24} /></HCell>
    <HCell on><svg width="24" height="24" viewBox="0 0 24 24"><path fillRule="evenodd" d="M17 1 L23 4 V20 L17 23 L7.5 14.2 L3 17.5 L1 16.5 V7.5 L3 6.5 L7.5 9.8Z M17 7 L10.5 12 L17 17Z M3.5 9.5 V14.5 L6 12Z" fill="#0a84d6" /></svg></HCell>
    <HCell><div className="w-[22px] h-[25px] bg-[#1d3a78] flex flex-col items-center justify-center font-['Liberation_Sans',sans-serif] font-bold leading-[11px] text-[9px]"><span className="text-[#d8e4ff]">DEV</span><span className="text-[#2a7be8]">C++</span></div></HCell>
    <HCell on><div className="w-[22px] h-[25px] bg-[linear-gradient(135deg,#22d88f,#087cfa)] p-[3px]"><div className="w-full h-full bg-black font-['Liberation_Sans',sans-serif] font-bold text-[9px] leading-[11px] pl-[2px]">CL<div className="w-[7px] h-[2px] bg-white mt-[3px]" /></div></div></HCell>
    <HCell><div className="w-[22px] h-[25px] bg-[linear-gradient(135deg,#fe315d,#f97a12,#087cfa)] p-[3px]"><div className="w-full h-full bg-black font-['Liberation_Sans',sans-serif] font-bold text-[9px] leading-[11px] pl-[3px]">IJ<div className="w-[7px] h-[2px] bg-white mt-[3px]" /></div></div></HCell>
    <HCell on hl><Veyon s={26} /></HCell>
    <div className="flex-1" />
    <div className="flex items-center text-[12px] leading-[17px] text-[#e8e8e8]">
      <ChevronUp size={16} className="mr-[9px]" />
      <Video size={16} strokeWidth={1.2} className="mr-[7.5px]" />
      <Monitor size={17} strokeWidth={1.2} className="mr-[7.5px]" />
      <Volume2 size={16} strokeWidth={1.2} className="mr-[6px]" />
      <div className="w-[30px] text-center">ENG<br />US</div>
      <div className="w-[70px] ml-[1px] text-center">1:07 PM<br />11/16/2021</div>
      <svg width="18" height="18" viewBox="0 0 18 18" fill="none" stroke="#e8e8e8" strokeWidth="1.1" className="ml-[8px] mr-[20px]"><path d="M1.5 2.5 H16.5 V14 H11.5 L9 16.5 L6.5 14 H1.5Z" /></svg>
      <span className="w-px h-full bg-[#555] mr-[3px]" />
    </div>
  </div>
);

export default function App() {
  return (
    <div className="w-[1680px] h-[1050px] bg-black overflow-hidden flex flex-col relative">
      <svg className="absolute w-0 h-0">
        <defs>
          <linearGradient id="edgeA" x1="0" y1="0" x2="1" y2="0"><stop offset="0" stopColor="#0c59a4" /><stop offset="1" stopColor="#114a8b" /></linearGradient>
          <linearGradient id="edgeB" x1="0.6" y1="0.4" x2="0.1" y2="0.9"><stop offset="0" stopColor="#1b9de2" /><stop offset="1" stopColor="#0d6fc0" /></linearGradient>
          <linearGradient id="edgeC" x1="0.1" y1="0.2" x2="0.9" y2="0.7"><stop offset="0" stopColor="#33bfe8" /><stop offset="0.55" stopColor="#35c1a0" /><stop offset="1" stopColor="#7ee04f" /></linearGradient>
          <linearGradient id="ffA" x1="0.2" y1="0" x2="0.8" y2="1"><stop offset="0" stopColor="#ffbd2a" /><stop offset="1" stopColor="#f5303a" /></linearGradient>
        </defs>
      </svg>
      <div className="h-[31px] shrink-0 bg-white border-t border-[#333] flex items-center text-[#111] font-['Noto_Sans','Noto_Sans_CJK_TC',sans-serif] text-[12px] relative">
        <span className="absolute left-[841px] top-[-1px] w-[21px] h-[1px] bg-[#2a86d8]" />
        <span className="ml-[8px] mr-[5px]"><Veyon s={17} dark /></span>
        <span>Veyon 示範</span>
        <div className="flex-1" />
        <Minus size={13} strokeWidth={1.2} className="mr-[32px]" />
        <Square size={10} strokeWidth={1.5} className="mr-[38px]" />
        <X size={14} strokeWidth={1.2} className="mr-[7px]" />
      </div>
      <div className="h-[653px] shrink-0 flex">
        <div className="w-[1047px] h-full flex flex-col blur-[0.35px]">
          <div className="flex-1 relative overflow-hidden bg-[linear-gradient(108deg,#0d97ec_0%,#00aafa_18%,#00acfb_32%,#0a86e4_48%,#0a5fce_62%,#0d45b8_100%)]">
            <DesktopIcons />
            <ExplorerWindow />
            <div className="absolute left-[1001px] top-[466px] w-[46px] h-[157px] bg-white">
              <span className="absolute left-[35px] top-[2px] font-['Liberation_Serif',serif] font-bold text-[12px] text-[#222] leading-[14px]">X</span>
            </div>
            <WordWindow />
          </div>
          <LeftTaskbar />
        </div>
        <div className="blur-[0.35px]"><ExcelWindow /></div>
      </div>
      <div className="flex-1" />
      <HostTaskbar />
      <span className="absolute left-0 top-0 bottom-[366px] w-px bg-[#333]" />
    </div>
  );
}
